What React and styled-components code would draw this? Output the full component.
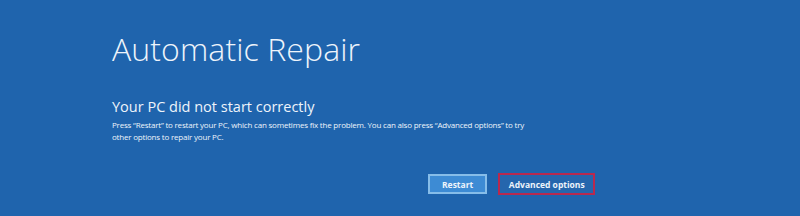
import React from 'react'
import styled, { createGlobalStyle } from 'styled-components'

const GlobalStyle = createGlobalStyle`
    html, body {
        margin: 0;
        padding: 0;
        background: #1f64ad;
    }
    body {
        font-family: "Open Sans", "Segoe UI", sans-serif;
        color: #eef4fb;
    }
`

const Screen = styled.div`
    width: 800px;
    height: 216px;
    background: #1f64ad;
    box-sizing: border-box;
    padding: 29px 0 0 111px;
    display: flex;
    flex-direction: column;
`

const Title = styled.h1`
    margin: 0 0 0 1px;
    font-size: 32px;
    font-weight: 300;
    line-height: 40px;
    letter-spacing: 0.1px;
`

const Subtitle = styled.h2`
    margin: 28px 0 0 1px;
    font-size: 14.5px;
    font-weight: 400;
    line-height: 20px;
`

const Body = styled.p`
    margin: 2px 0 0 1px;
    width: 414px;
    font-size: 8px;
    letter-spacing: -0.2px;
    line-height: 11.5px;
`

const Actions = styled.div`
    display: flex;
    gap: 11px;
    margin: 31px 0 0 317px;
`

const Button = styled.button`
    font-family: "Open Sans", "Segoe UI", sans-serif;
    font-size: 8.5px;
    font-weight: 700;
    color: #eef4fb;
    height: ${p => (p.$focused ? '22px' : '20px')};
    padding: 0 ${p => (p.$focused ? '8px' : '12px')};
    min-width: ${p => (p.$focused ? '97px' : '56px')};
    margin-top: ${p => (p.$focused ? '0' : '1px')};
    background: ${p => (p.$focused ? '#2566ad' : '#3d8bd4')};
    border: 2px solid ${p => (p.$focused ? '#b8294f' : '#86bde9')};
    box-sizing: border-box;
    cursor: pointer;
`

export default function App() {
    return (
        <>
            <GlobalStyle />
            <Screen>
                <Title>Automatic Repair</Title>
                <Subtitle>Your PC did not start correctly</Subtitle>
                <Body>
                    Press “Restart” to restart your PC, which can sometimes fix the problem. You can also
                    press “Advanced options” to try other options to repair your PC.
                </Body>
                <Actions>
                    <Button>Restart</Button>
                    <Button $focused>Advanced options</Button>
                </Actions>
            </Screen>
        </>
    )
}
